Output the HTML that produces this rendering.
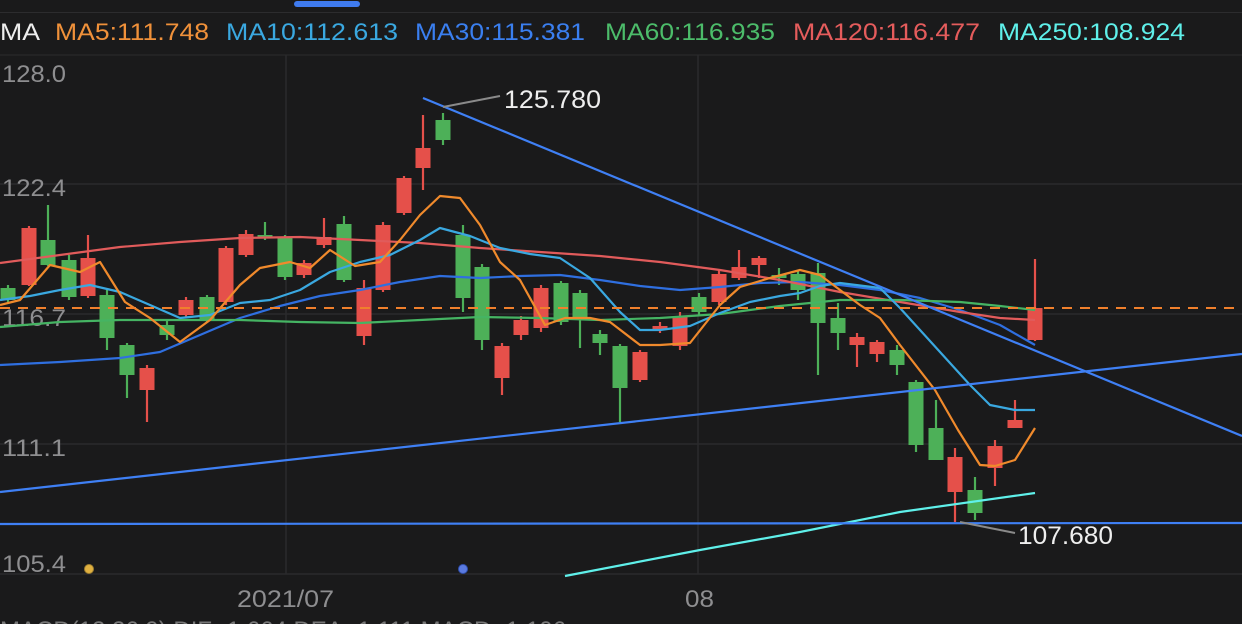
<!DOCTYPE html>
<html><head><meta charset="utf-8"><style>
html,body{margin:0;padding:0;background:#1a1a1b;width:1242px;height:624px;overflow:hidden}
svg{display:block}
text{font-family:"Liberation Sans",Arial,sans-serif}
</style></head><body>
<svg id="s" width="1242" height="624" xmlns="http://www.w3.org/2000/svg">
<rect width="1242" height="624" fill="#1a1a1b"/>
<rect x="294" y="1" width="66" height="6" rx="3" fill="#3f7bef"/>
<line x1="0" y1="12.5" x2="1242" y2="12.5" stroke="#2c2c2e"/>
<line x1="0" y1="55" x2="1242" y2="55" stroke="#2c2c2e"/>
<g font-size="24" lengthAdjust="spacingAndGlyphs">
<text x="0" y="40" fill="#eeeeee" textLength="40" lengthAdjust="spacingAndGlyphs">MA</text>
<text x="55" y="40" fill="#f0913a" textLength="154" lengthAdjust="spacingAndGlyphs">MA5:111.748</text>
<text x="226" y="40" fill="#3aa8e0" textLength="172" lengthAdjust="spacingAndGlyphs">MA10:112.613</text>
<text x="415" y="40" fill="#3a7ff0" textLength="170" lengthAdjust="spacingAndGlyphs">MA30:115.381</text>
<text x="605" y="40" fill="#4cbc6a" textLength="170" lengthAdjust="spacingAndGlyphs">MA60:116.935</text>
<text x="793" y="40" fill="#e55c5c" textLength="187" lengthAdjust="spacingAndGlyphs">MA120:116.477</text>
<text x="998" y="40" fill="#5ff0ea" textLength="187" lengthAdjust="spacingAndGlyphs">MA250:108.924</text>
</g>
<g stroke="#2a2a2c" stroke-width="1.5">
<line x1="0" y1="184" x2="1242" y2="184"/>
<line x1="0" y1="314" x2="1242" y2="314"/>
<line x1="0" y1="444" x2="1242" y2="444"/>
<line x1="0" y1="574" x2="1242" y2="574"/>
<line x1="286" y1="55" x2="286" y2="574"/>
<line x1="698" y1="55" x2="698" y2="574"/>
</g>
<g font-size="24" fill="#8e8e90">
<text x="2" y="82" textLength="64" lengthAdjust="spacingAndGlyphs">128.0</text>
<text x="2" y="196" textLength="64" lengthAdjust="spacingAndGlyphs">122.4</text>
<text x="2" y="326" textLength="64" lengthAdjust="spacingAndGlyphs">116.7</text>
<text x="2" y="456" textLength="64" lengthAdjust="spacingAndGlyphs">111.1</text>
<text x="2" y="572" textLength="64" lengthAdjust="spacingAndGlyphs">105.4</text>
<text x="237" y="607" textLength="97" lengthAdjust="spacingAndGlyphs">2021/07</text>
<text x="685" y="607" textLength="29" lengthAdjust="spacingAndGlyphs">08</text>
</g>
<g id="c"></g>
<g fill="none" stroke-width="2.2" stroke-linejoin="round">
<polyline stroke="#2f6fe0" points="0,365 60,362 120,358 160,352 200,335 240,318 280,306 320,296 360,290 400,282 440,276 480,278 520,276 560,275 600,280 640,286 680,290 720,287 760,283 800,282 840,285 880,290 920,298 960,310 1000,325 1035,345"/>
<polyline stroke="#e15b5b" points="0,263 60,255 120,247 180,242 240,238 300,237 360,240 420,243 480,248 540,252 600,256 660,262 720,270 780,280 840,292 900,302 960,312 1000,318 1035,320"/>
<polyline stroke="#45b463" points="0,327 60,322 120,320 180,320 240,320 300,322 360,323 420,320 480,317 540,318 600,320 660,318 720,314 780,306 840,300 900,300 960,302 1000,306 1035,310"/>
<polyline stroke="#3aa8e0" points="0,300 30,296 60,290 90,285 120,292 150,305 180,318 210,315 240,303 270,300 300,290 330,272 360,262 390,255 420,240 440,228 470,236 500,248 530,254 560,258 590,278 620,312 640,330 660,330 690,326 720,313 750,302 780,296 800,293 820,286 840,283 880,288 900,308 940,352 970,385 990,405 1015,410 1035,410"/>
<polyline stroke="#f08a2c" points="0,305 20,300 50,265 80,272 100,262 125,302 150,318 180,342 210,320 240,285 260,268 290,262 310,268 330,250 355,266 380,262 400,240 420,215 440,196 460,198 480,225 500,262 520,280 545,325 565,318 590,318 610,322 640,345 660,345 690,343 720,305 740,287 770,278 800,270 820,275 840,290 860,305 880,318 900,345 935,390 958,430 980,465 995,466 1015,460 1035,428"/>
<polyline stroke="#5ff0ea" points="565,576 700,550 800,532 900,512 1035,493"/>
<line x1="0" y1="308" x2="1242" y2="308" stroke="#f0802c" stroke-width="2" stroke-dasharray="10,8"/>
<line x1="423" y1="98" x2="1242" y2="436" stroke="#3f80f5" stroke-width="2.2"/>
<line x1="0" y1="492" x2="1242" y2="354" stroke="#3f80f5" stroke-width="2.2"/>
<line x1="0" y1="524" x2="1242" y2="523" stroke="#3f80f5" stroke-width="2.2"/>
<line x1="443" y1="107" x2="500" y2="96" stroke="#8a8a8a" stroke-width="2"/>
<line x1="960" y1="522" x2="1015" y2="533" stroke="#8a8a8a" stroke-width="2"/>
</g>
<g font-size="25" fill="#eeeeee">
<text x="504" y="108" textLength="97" lengthAdjust="spacingAndGlyphs">125.780</text>
<text x="1018" y="544" textLength="95" lengthAdjust="spacingAndGlyphs">107.680</text>
</g>
<circle cx="89" cy="569" r="4.5" fill="#e0b040" stroke="#a08030"/>
<circle cx="463" cy="569" r="4.5" fill="#5a7ae0" stroke="#3050b0"/>
<text x="0" y="638" font-size="24" fill="#777">MACD(12,26,9) DIF:-1.664 DEA:-1.111 MACD:-1.106</text>
</svg>
<script>
var d=[[8,'g',288,300,285,302],[29,'r',228,285,226,286],[48,'g',240,265,205,266],[69,'g',260,297,255,300],[88,'r',258,296,235,298],[107,'g',295,338,290,350],[127,'g',345,375,343,398],[147,'r',368,390,365,422],[167,'g',325,335,320,340],[186,'r',300,315,297,318],[207,'g',297,320,295,322],[226,'r',248,302,246,305],[246,'r',234,255,230,257],[265,'g',235,238,222,240],[285,'g',237,277,235,280],[304,'r',263,275,260,278],[324,'r',237,245,218,248],[344,'g',224,280,216,282],[364,'r',288,336,280,345],[383,'r',225,290,222,292],[404,'r',178,213,176,215],[423,'r',148,168,115,190],[443,'g',120,140,113,145],[463,'g',235,298,225,312],[482,'g',267,340,264,350],[502,'r',346,378,343,395],[521,'r',320,335,316,340],[541,'r',288,328,285,332],[561,'g',283,322,281,325],[580,'g',293,318,290,348],[600,'g',334,343,330,355],[620,'g',346,388,344,422],[640,'r',352,380,350,382],[660,'r',326,330,322,333],[680,'r',316,346,312,350],[699,'g',297,312,293,316],[719,'r',274,302,270,305],[739,'r',267,278,250,280],[759,'r',258,265,256,278],[779,'g',275,278,268,285],[798,'g',274,290,270,300],[818,'g',273,323,263,375],[838,'g',318,333,303,350],[857,'r',337,345,333,367],[877,'r',342,354,340,362],[897,'g',350,365,345,375],[916,'g',382,445,380,452],[936,'g',428,460,400,460],[955,'r',457,492,448,522],[975,'g',490,513,477,520],[995,'r',446,468,440,486],[1015,'r',420,428,400,428],[1035,'r',308,340,259,341]];
var h='';d.forEach(function(c){var col=c[1]=='r'?'#e5504a':'#4db058';h+='<line x1="'+c[0]+'" y1="'+c[4]+'" x2="'+c[0]+'" y2="'+c[5]+'" stroke="'+col+'" stroke-width="2.2"/><rect x="'+(c[0]-7.5)+'" y="'+c[2]+'" width="15" height="'+Math.max(3,c[3]-c[2])+'" fill="'+col+'"/>';});
document.getElementById('c').innerHTML=h;
</script>
</body></html>
